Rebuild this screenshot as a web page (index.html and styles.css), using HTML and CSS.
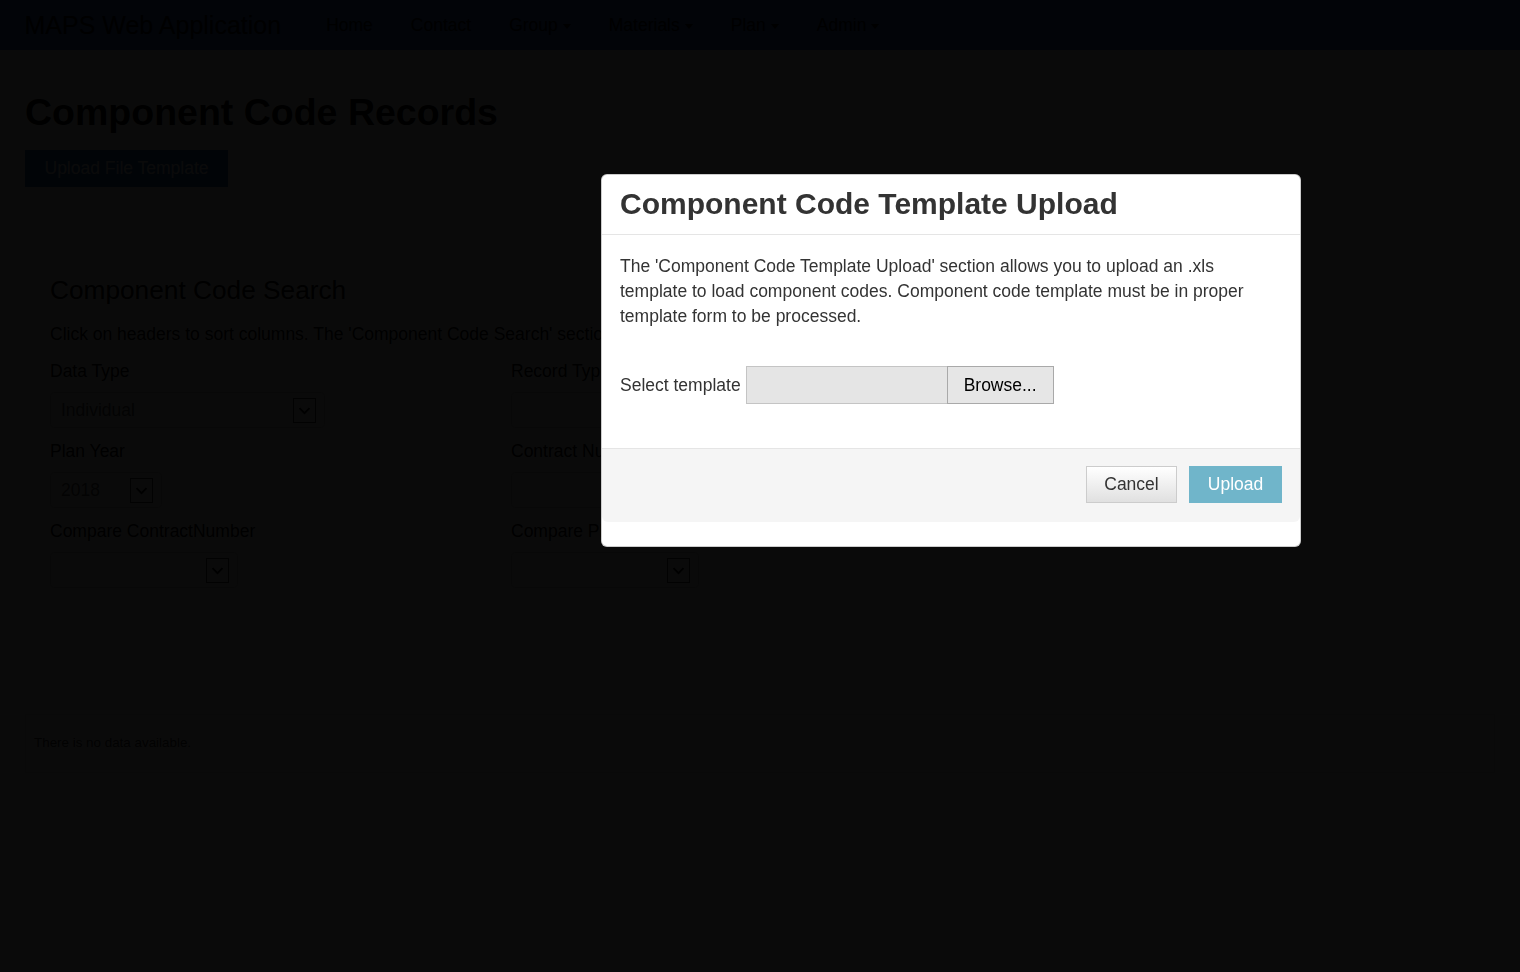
FILE: index.html
```html
<!DOCTYPE html>
<html lang="en">
<head>
<meta charset="utf-8">
<title>Component Code Records - MAPS Web Application</title>
<link rel="stylesheet" href="styles.css">
</head>
<body>
<header class="navbar">
  <a class="brand" href="#">MAPS Web Application</a>
  <ul class="nav">
    <li><a href="#">Home</a></li>
    <li><a href="#">Contact</a></li>
    <li><a href="#">Group<span class="caret"></span></a></li>
    <li><a href="#">Materials<span class="caret"></span></a></li>
    <li><a href="#">Plan<span class="caret"></span></a></li>
    <li><a href="#">Admin<span class="caret"></span></a></li>
  </ul>
</header>

<main class="container">
  <h1 class="page-title">Component Code Records</h1>
  <button class="btn-upload-template" type="button">Upload File Template</button>

  <section class="search">
    <h2 class="search-title">Component Code Search</h2>
    <p class="hint">Click on headers to sort columns. The 'Component Code Search' section allows you to search and filter component code records.</p>
    <div class="form-grid">
      <div class="field">
        <label class="field-label">Data Type</label>
        <div class="select select-wide"><span class="select-value">Individual</span><span class="select-arrow"><svg viewBox="0 0 23 25" width="23" height="25"><path d="M6 10 L11.5 15.5 L17 10" fill="none" stroke="#000" stroke-width="2"/></svg></span></div>
      </div>
      <div class="field">
        <label class="field-label">Record Type</label>
        <div class="select select-wide"><span class="select-value"></span></div>
      </div>
      <div class="field">
        <label class="field-label">Plan Year</label>
        <div class="select select-year"><span class="select-value">2018</span><span class="select-arrow"><svg viewBox="0 0 23 25" width="23" height="25"><path d="M6 10 L11.5 15.5 L17 10" fill="none" stroke="#000" stroke-width="2"/></svg></span></div>
      </div>
      <div class="field">
        <label class="field-label">Contract Number</label>
        <div class="select select-wide"><span class="select-value"></span></div>
      </div>
      <div class="field">
        <label class="field-label">Compare ContractNumber</label>
        <div class="select select-mid"><span class="select-value"></span><span class="select-arrow"><svg viewBox="0 0 23 25" width="23" height="25"><path d="M6 10 L11.5 15.5 L17 10" fill="none" stroke="#000" stroke-width="2"/></svg></span></div>
      </div>
      <div class="field">
        <label class="field-label">Compare Plan Year</label>
        <div class="select select-mid"><span class="select-value"></span><span class="select-arrow"><svg viewBox="0 0 23 25" width="23" height="25"><path d="M6 10 L11.5 15.5 L17 10" fill="none" stroke="#000" stroke-width="2"/></svg></span></div>
      </div>
    </div>
  </section>

  <div class="grid-box">
    <p class="empty">There is no data available.</p>
  </div>
</main>

<div class="backdrop"></div>

<div class="modal" role="dialog" aria-labelledby="modal-title">
  <div class="modal-header">
    <h3 class="modal-title" id="modal-title">Component Code Template Upload</h3>
  </div>
  <div class="modal-body">
    <p class="modal-text">The 'Component Code Template Upload' section allows you to upload an .xls template to load component codes. Component code template must be in proper template form to be processed.</p>
    <div class="file-row">
      <label class="file-label">Select template</label>
      <span class="file-box"></span>
      <button class="btn-browse" type="button">Browse...</button>
    </div>
  </div>
  <div class="modal-footer">
    <button class="btn-cancel" type="button">Cancel</button>
    <button class="btn-submit" type="button">Upload</button>
  </div>
</div>
</body>
</html>
```

FILE: styles.css
```css
* { box-sizing: border-box; }

html, body { height: 100%; }

body {
  margin: 0;
  background: #fff;
  color: #333;
  font-family: "Liberation Sans", Arial, sans-serif;
  font-size: 17.5px;
  line-height: 25px;
}

/* navbar */
.navbar {
  height: 50px;
  background: #3264c8;
  display: flex;
  align-items: center;
  padding-left: 24.5px;
}
.brand {
  font-size: 25px;
  line-height: 50px;
  color: #000;
  text-decoration: none;
}
.nav {
  display: flex;
  list-style: none;
  margin: 0 0 0 26px;
  padding: 0;
}
.nav a {
  display: block;
  padding: 0 19px;
  line-height: 50px;
  color: #000;
  text-decoration: none;
}
.caret {
  display: inline-block;
  width: 0;
  height: 0;
  margin-left: 5px;
  vertical-align: middle;
  border-top: 5px solid #000;
  border-left: 4px solid transparent;
  border-right: 4px solid transparent;
}

/* page */
.container {
  padding: 0 25px;
}
.page-title {
  margin: 41.8px 0 17px;
  font-size: 37.5px;
  line-height: 41.25px;
  font-weight: bold;
  color: #000;
}
.btn-upload-template {
  display: block;
  height: 37px;
  padding: 0 19.5px;
  border: 0;
  background: #1a5fb4;
  color: #fff;
  font-family: inherit;
  font-size: 17.5px;
  line-height: 37px;
}

.search {
  margin-top: 88.8px;
  padding: 0 25px;
}
.search-title {
  margin: 0 0 17px;
  font-size: 26.25px;
  line-height: 28.9px;
  font-weight: normal;
  color: #000;
}
.hint {
  margin: 0 0 12.7px;
  color: #000;
  white-space: nowrap;
}
.form-grid {
  display: grid;
  grid-template-columns: 461px 461px;
}
.field {
  margin-bottom: 11.4px;
}
.field-label {
  display: block;
  margin-bottom: 7.6px;
  color: #000;
}
.select {
  height: 36px;
  border: 1px solid #ccc;
  border-radius: 4px;
  display: flex;
  align-items: center;
  justify-content: space-between;
  padding: 0 8px 0 10px;
  color: #555;
}
.select-wide { width: 275px; }
.select-year { width: 112px; }
.select-mid { width: 188px; }
.select-arrow {
  display: block;
  width: 23px;
  height: 25px;
  border: 1px solid #333;
  margin-top: 1px;
}
.select-arrow svg {
  display: block;
  width: 21px;
  height: 23px;
}

.grid-box {
  margin-top: 114.6px;
  border: 1px solid #ddd;
  padding: 17.7px 8px 20px;
}
.empty {
  margin: 0;
  font-size: 13.4px;
  line-height: 19px;
  color: #333;
}

/* modal */
.backdrop {
  position: fixed;
  inset: 0;
  background: rgba(0, 0, 0, 0.96);
}
.modal {
  position: fixed;
  top: 174px;
  left: 601px;
  width: 700px;
  background: #fff;
  border: 1px solid rgba(0, 0, 0, 0.2);
  border-radius: 6px;
  padding-bottom: 24px;
}
.modal-header {
  padding: 12px 18px 14px;
  border-bottom: 1px solid #e5e5e5;
}
.modal-title {
  margin: 0;
  font-size: 30px;
  line-height: 33px;
  font-weight: bold;
  color: #333;
}
.modal-body {
  padding: 19px 18px 18px;
}
.modal-text {
  margin: 0 0 37px;
  color: #333;
}
.file-row {
  display: flex;
  align-items: center;
  margin-bottom: 26px;
}
.file-label {
  margin-right: 5px;
  color: #333;
}
.file-box {
  display: block;
  width: 201px;
  height: 38px;
  background: #e5e5e5;
  border: 1px solid #c4c4c4;
  border-right: 0;
}
.btn-browse {
  width: 107px;
  height: 38px;
  border: 1px solid #a9a9a9;
  background: #e6e6e6;
  color: #000;
  font-family: inherit;
  font-size: 17.5px;
  padding: 0;
}
.modal-footer {
  border-top: 1px solid #e5e5e5;
  background: #f5f5f5;
  border-radius: 0 0 6px 6px;
  padding: 17px 18px 19px;
  display: flex;
  justify-content: flex-end;
  gap: 12px;
}
.btn-cancel,
.btn-submit {
  height: 37px;
  font-family: inherit;
  font-size: 17.5px;
  padding: 0;
}
.btn-cancel {
  width: 91px;
  border: 1px solid #ccc;
  background: linear-gradient(#fff, #e0e0e0);
  color: #333;
}
.btn-submit {
  width: 93px;
  border: 1px solid #70b5ca;
  background: #70b5ca;
  color: #fff;
}
```
